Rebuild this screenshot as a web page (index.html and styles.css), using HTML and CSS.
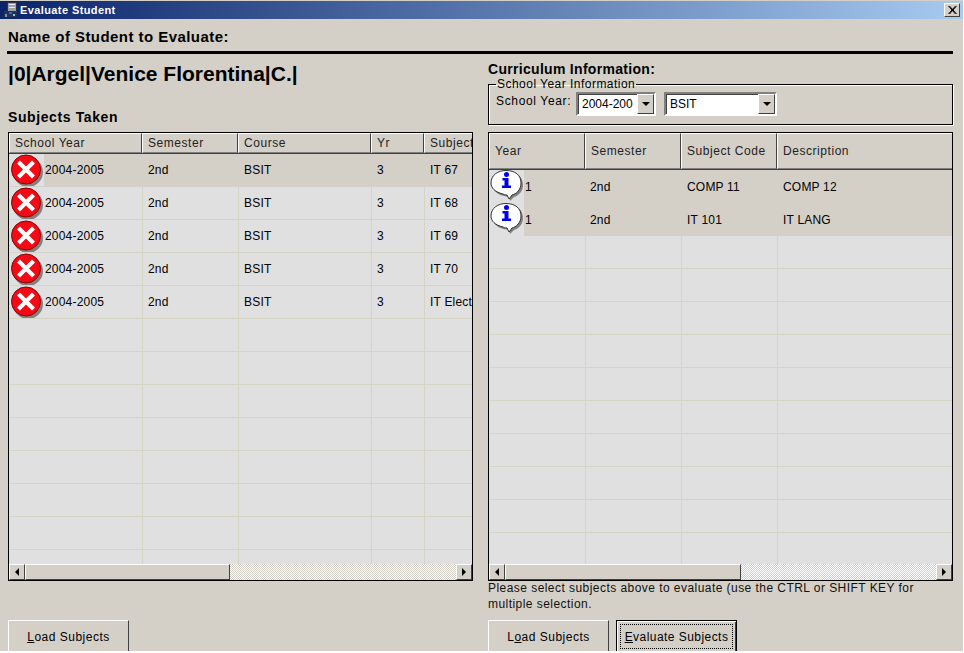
FILE: index.html

```html
<!DOCTYPE html>
<html lang="en">
<head>
    <meta charset="UTF-8">
    <title>Evaluate Student</title>
    <link rel="stylesheet" href="styles.css">
</head>
<body>

    <svg class="defs" width="0" height="0">
        <symbol id="icon-error" viewBox="0 0 34 34">
            <circle cx="18" cy="18" r="15" fill="#808080"/>
            <circle cx="16" cy="15.5" r="14.5" fill="#f40a14" stroke="#8a0008" stroke-width="1"/>
            <path d="M8.5 8 L23.5 23 M23.5 8 L8.5 23" stroke="#fff" stroke-width="4.2" fill="none"/>
        </symbol>
        <symbol id="icon-info" viewBox="0 0 34 34">
            <path d="M14 26 C6 24 3 20 3 15 C3 7 10 2 18 2 C27 2 33 7 33 15 C33 22 28 26 24 27 L20 31 L19 27 Z" fill="#808080"/>
            <path d="M13 24 C5 22 1 18 1 13 C1 5 8 0.5 16 0.5 C25 0.5 31 5 31 13 C31 20 26 24 22 25 L19 29 L17 25 C15 25 14 24.5 13 24 Z" fill="#fff" stroke="#333" stroke-width="1"/>
            <circle cx="16.5" cy="4.5" r="2.5" fill="#0000f0"/>
            <path d="M12.5 8 H18.5 V15.5 H21 V18 H12 V15.5 H14.5 V10.5 H12.5 Z" fill="#0000f0"/>
        </symbol>
    </svg>

    <div class="window">
        <div class="titlebar">
            <svg class="title-icon" width="14" height="16" viewBox="0 0 14 16">
                <rect x="3.5" y="0.5" width="9" height="12" fill="#a0a0a8" stroke="#30304a"/>
                <rect x="5" y="2" width="6" height="1" fill="#e8e8f0"/>
                <rect x="5" y="5" width="6" height="1" fill="#e8e8f0"/>
                <rect x="0" y="9" width="13" height="6" fill="#26324f"/>
                <rect x="1" y="12" width="2" height="3" fill="#7f90a0"/>
                <rect x="5" y="10" width="3" height="2" fill="#1a70e0"/>
                <rect x="9" y="12" width="2" height="2" fill="#7fd0e0"/>
            </svg>
            <span class="title-text">Evaluate Student</span>
            <span class="close-btn">
                <svg width="9" height="8" viewBox="0 0 9 8"><path d="M0.5 0 L7.5 8 M1.5 0 L8.5 8 M7.5 0 L0.5 8 M8.5 0 L1.5 8" stroke="#000" stroke-width="1" fill="none"/></svg>
            </span>
        </div>

        <div class="student-head">Name of Student to Evaluate:</div>
        <div class="rule"></div>

        <div class="columns">
            <div class="panel">
                <div class="student-name">|0|Argel|Venice Florentina|C.|</div>
                <div class="section-label subjects-label">Subjects Taken</div>

                <div class="grid">
                    <div class="grid-head left-head">
                        <div class="hcell c1">School Year</div>
                        <div class="hcell c2">Semester</div>
                        <div class="hcell c3">Course</div>
                        <div class="hcell c4">Yr</div>
                        <div class="hcell c5">Subject</div>
                    </div>
                    <div class="grid-body">
                        <div class="row current">
                            <div class="cell c1"><span class="icon-cell"><svg width="34" height="34"><use href="#icon-error"/></svg></span>2004-2005</div>
                            <div class="cell c2">2nd</div><div class="cell c3">BSIT</div><div class="cell c4">3</div><div class="cell c5">IT 67</div>
                        </div>
                        <div class="row">
                            <div class="cell c1"><span class="icon-cell"><svg width="34" height="34"><use href="#icon-error"/></svg></span>2004-2005</div>
                            <div class="cell c2">2nd</div><div class="cell c3">BSIT</div><div class="cell c4">3</div><div class="cell c5">IT 68</div>
                        </div>
                        <div class="row">
                            <div class="cell c1"><span class="icon-cell"><svg width="34" height="34"><use href="#icon-error"/></svg></span>2004-2005</div>
                            <div class="cell c2">2nd</div><div class="cell c3">BSIT</div><div class="cell c4">3</div><div class="cell c5">IT 69</div>
                        </div>
                        <div class="row">
                            <div class="cell c1"><span class="icon-cell"><svg width="34" height="34"><use href="#icon-error"/></svg></span>2004-2005</div>
                            <div class="cell c2">2nd</div><div class="cell c3">BSIT</div><div class="cell c4">3</div><div class="cell c5">IT 70</div>
                        </div>
                        <div class="row">
                            <div class="cell c1"><span class="icon-cell"><svg width="34" height="34"><use href="#icon-error"/></svg></span>2004-2005</div>
                            <div class="cell c2">2nd</div><div class="cell c3">BSIT</div><div class="cell c4">3</div><div class="cell c5">IT Elective</div>
                        </div>
                        <div class="row"><div class="cell c1"></div><div class="cell c2"></div><div class="cell c3"></div><div class="cell c4"></div><div class="cell c5"></div></div>
                        <div class="row"><div class="cell c1"></div><div class="cell c2"></div><div class="cell c3"></div><div class="cell c4"></div><div class="cell c5"></div></div>
                        <div class="row"><div class="cell c1"></div><div class="cell c2"></div><div class="cell c3"></div><div class="cell c4"></div><div class="cell c5"></div></div>
                        <div class="row"><div class="cell c1"></div><div class="cell c2"></div><div class="cell c3"></div><div class="cell c4"></div><div class="cell c5"></div></div>
                        <div class="row"><div class="cell c1"></div><div class="cell c2"></div><div class="cell c3"></div><div class="cell c4"></div><div class="cell c5"></div></div>
                        <div class="row"><div class="cell c1"></div><div class="cell c2"></div><div class="cell c3"></div><div class="cell c4"></div><div class="cell c5"></div></div>
                        <div class="row"><div class="cell c1"></div><div class="cell c2"></div><div class="cell c3"></div><div class="cell c4"></div><div class="cell c5"></div></div>
                        <div class="row"><div class="cell c1"></div><div class="cell c2"></div><div class="cell c3"></div><div class="cell c4"></div><div class="cell c5"></div></div>
                    </div>
                    <div class="scrollbar">
                        <span class="sb-btn"><i class="arrow-left"></i></span>
                        <span class="sb-thumb left-thumb"></span>
                        <span class="sb-track"></span>
                        <span class="sb-btn"><i class="arrow-right"></i></span>
                    </div>
                </div>

                <div class="buttons left-buttons">
                    <button class="btn"><u>L</u>oad Subjects</button>
                </div>
            </div>

            <div class="panel">
                <div class="section-label curriculum-label">Curriculum Information:</div>
                <fieldset class="groupbox">
                    <legend>School Year Information</legend>
                    <span class="field-label">School Year:</span>
                    <span class="combo year-combo">2004-200<span class="combo-btn"><i class="arrow-down"></i></span></span>
                    <span class="combo course-combo">BSIT<span class="combo-btn"><i class="arrow-down"></i></span></span>
                </fieldset>

                <div class="grid">
                    <div class="grid-head right-head">
                        <div class="hcell d1">Year</div>
                        <div class="hcell d2">Semester</div>
                        <div class="hcell d3">Subject Code</div>
                        <div class="hcell d4">Description</div>
                    </div>
                    <div class="grid-body">
                        <div class="row current info-row">
                            <div class="cell d1"><span class="icon-cell"><svg width="34" height="34"><use href="#icon-info"/></svg></span>1</div>
                            <div class="cell d2">2nd</div><div class="cell d3">COMP 11</div><div class="cell d4">COMP 12</div>
                        </div>
                        <div class="row current info-row">
                            <div class="cell d1"><span class="icon-cell"><svg width="34" height="34"><use href="#icon-info"/></svg></span>1</div>
                            <div class="cell d2">2nd</div><div class="cell d3">IT 101</div><div class="cell d4">IT LANG</div>
                        </div>
                        <div class="row"><div class="cell d1"></div><div class="cell d2"></div><div class="cell d3"></div><div class="cell d4"></div></div>
                        <div class="row"><div class="cell d1"></div><div class="cell d2"></div><div class="cell d3"></div><div class="cell d4"></div></div>
                        <div class="row"><div class="cell d1"></div><div class="cell d2"></div><div class="cell d3"></div><div class="cell d4"></div></div>
                        <div class="row"><div class="cell d1"></div><div class="cell d2"></div><div class="cell d3"></div><div class="cell d4"></div></div>
                        <div class="row"><div class="cell d1"></div><div class="cell d2"></div><div class="cell d3"></div><div class="cell d4"></div></div>
                        <div class="row"><div class="cell d1"></div><div class="cell d2"></div><div class="cell d3"></div><div class="cell d4"></div></div>
                        <div class="row"><div class="cell d1"></div><div class="cell d2"></div><div class="cell d3"></div><div class="cell d4"></div></div>
                        <div class="row"><div class="cell d1"></div><div class="cell d2"></div><div class="cell d3"></div><div class="cell d4"></div></div>
                        <div class="row"><div class="cell d1"></div><div class="cell d2"></div><div class="cell d3"></div><div class="cell d4"></div></div>
                        <div class="row"><div class="cell d1"></div><div class="cell d2"></div><div class="cell d3"></div><div class="cell d4"></div></div>
                    </div>
                    <div class="scrollbar">
                        <span class="sb-btn"><i class="arrow-left"></i></span>
                        <span class="sb-thumb right-thumb"></span>
                        <span class="sb-track"></span>
                        <span class="sb-btn"><i class="arrow-right"></i></span>
                    </div>
                </div>

                <p class="hint">Please select subjects above to evaluate (use the CTRL or SHIFT KEY for multiple selection.</p>

                <div class="buttons">
                    <button class="btn">L<u>o</u>ad Subjects</button>
                    <button class="btn default"><span class="focus"><u>E</u>valuate Subjects</span></button>
                </div>
            </div>
        </div>
    </div>

</body>
</html>
```

FILE: styles.css

```css
* {
    box-sizing: border-box;
}
html, body {
    margin: 0;
    padding: 0;
    background: #fff;
}
body {
    font-family: "Liberation Sans", Arial, sans-serif;
    font-size: 12px;
    color: #000;
}
.defs {
    position: absolute;
}
.window {
    width: 963px;
    height: 651px;
    overflow: hidden;
    background: #d4d0c8;
    border-top: 1px solid #d4d0c8;
}

/* title bar */
.titlebar {
    height: 18px;
    display: flex;
    align-items: center;
    background: linear-gradient(to right, #0a246a, #a6caf0);
    color: #fff;
    font-size: 11px;
    font-weight: bold;
    letter-spacing: 0.4px;
    padding-left: 4px;
}
.title-icon {
    margin-right: 2px;
}
.close-btn {
    margin-left: auto;
    margin-right: 3px;
    width: 16px;
    height: 14px;
    display: flex;
    align-items: center;
    justify-content: center;
    background: #d4d0c8;
    border: 1px solid;
    border-color: #fff #404040 #404040 #fff;
}

/* heading */
.student-head {
    font-size: 15px;
    font-weight: bold;
    padding: 9px 0 0 8px;
    height: 32px;
    letter-spacing: 0.45px;
}
.rule {
    height: 3px;
    width: 946px;
    margin-left: 7px;
    background: #000;
}
.columns {
    display: flex;
    gap: 15px;
    padding-left: 8px;
}
.panel {
    width: 465px;
    flex: none;
}
.student-name {
    font-size: 21px;
    font-weight: bold;
    height: 23px;
    margin-top: 8px;
    line-height: 23px;
}
.section-label {
    font-size: 14px;
    font-weight: bold;
    line-height: 15px;
}
.subjects-label {
    margin-top: 25px;
    height: 22px;
    letter-spacing: 0.6px;
}
.curriculum-label {
    margin-top: 8px;
    height: 16px;
    letter-spacing: 0.3px;
}

/* group box */
.groupbox {
    margin: 0 0 7px;
    padding: 0 0 0 7px;
    height: 47px;
    border: 1px solid #000;
    box-shadow: inset 1px 1px 0 #fff, 1px 1px 0 #fff;
    display: flex;
    align-items: flex-start;
}
.groupbox legend {
    padding: 0 1px;
    margin-left: 0;
    line-height: 12px;
    letter-spacing: 0.47px;
}
.field-label {
    letter-spacing: 0.65px;
    line-height: 14px;
    margin-top: 4px;
    width: 80px;
    flex: none;
}
.combo {
    height: 24px;
    background: #fff;
    border: 2px solid;
    border-color: #808080 #fff #fff #808080;
    box-shadow: inset 1px 1px 0 #404040;
    display: flex;
    align-items: center;
    padding-left: 4px;
    justify-content: space-between;
    flex: none;
    margin-top: 2px;
}
.year-combo {
    width: 80px;
    margin-right: 8px;
}
.course-combo {
    width: 113px;
}
.combo-btn {
    width: 17px;
    height: 20px;
    background: #d4d0c8;
    border: 1px solid;
    border-color: #fff #404040 #404040 #fff;
    display: flex;
    align-items: center;
    justify-content: center;
}
.arrow-down {
    border: 4px solid transparent;
    border-top-color: #000;
    border-bottom: 0;
}
.arrow-left {
    border: 4px solid transparent;
    border-right-color: #000;
    border-left: 0;
}
.arrow-right {
    border: 4px solid transparent;
    border-left-color: #000;
    border-right: 0;
}

/* grids */
.grid {
    height: 449px;
    border: 1px solid #000;
    background: #e0e0e0;
    display: flex;
    flex-direction: column;
    overflow: hidden;
    letter-spacing: 0.2px;
}
.grid-head {
    display: flex;
    flex: none;
    background: #d4d0c8;
    border-bottom: 1px solid #404040;
}
.left-head {
    height: 21px;
}
.right-head {
    height: 37px;
}
.hcell {
    border: 1px solid;
    border-color: #fff #404040 #808080 #fff;
    padding-left: 5px;
    display: flex;
    align-items: center;
    flex: none;
    letter-spacing: 0.55px;
    color: #222;
    white-space: nowrap;
    overflow: hidden;
}
.c1 { width: 133px; }
.c2 { width: 96px; }
.c3 { width: 133px; }
.c4 { width: 53px; }
.c5 { width: 50px; }
.d1 { width: 96px; }
.d2 { width: 96px; }
.d3 { width: 96px; }
.d4 { width: 176px; }
.grid-body {
    flex: 1;
    overflow: hidden;
}
.row {
    display: flex;
    height: 33px;
}
.row.current {
    background: #d4d0c8;
}
.cell {
    flex: none;
    height: 33px;
    border-right: 1px solid #d6d4c4;
    border-bottom: 1px solid #d6d4c4;
    padding-left: 5px;
    display: flex;
    align-items: center;
    white-space: nowrap;
    overflow: hidden;
}
.current .cell {
    border-color: transparent;
}
.info-row .cell {
    border-bottom: 0;
}
.cell.c1, .cell.d1 {
    padding-left: 0;
}
/* body columns sit one pixel right of the header separators */
.cell.c1 {
    width: 134px;
}
.cell.d1 {
    width: 97px;
}
.cell.d2 {
    padding-left: 4px;
}
.icon-cell {
    width: 35px;
    height: 33px;
    flex: none;
    background: #e0e0e0;
    display: block;
    padding: 0 0 0 1px;
    margin-right: 1px;
}
.icon-cell svg {
    display: block;
}

/* scrollbar */
.scrollbar {
    flex: none;
    height: 16px;
    display: flex;
    background: #d4d0c8;
}
.sb-btn {
    width: 16px;
    height: 16px;
    flex: none;
    display: flex;
    align-items: center;
    justify-content: center;
    background: #d4d0c8;
    border: 1px solid;
    border-color: #fff #404040 #404040 #fff;
}
.sb-thumb {
    flex: none;
    background: #d4d0c8;
    border: 1px solid;
    border-color: #fff #404040 #404040 #fff;
}
.left-thumb {
    width: 205px;
}
.right-thumb {
    width: 236px;
}
.sb-track {
    flex: 1;
    background: repeating-conic-gradient(#fff 0 25%, #d4d0c8 0 50%) 0 0 / 2px 2px;
}

/* bottom */
.hint {
    margin: -1px 0 0;
    height: 40px;
    line-height: 16px;
    letter-spacing: 0.45px;
    color: #111;
}
.buttons {
    display: flex;
    gap: 7px;
}
.left-buttons {
    margin-top: 39px;
}
.btn {
    font-family: inherit;
    font-size: 12px;
    letter-spacing: 0.5px;
    width: 121px;
    height: 40px;
    padding: 0 0 6px;
    background: #d4d0c8;
    border: 1px solid;
    border-color: #fff #404040 #404040 #fff;
    color: #000;
}
.btn.default {
    border: 1px solid #000;
    box-shadow: inset 1px 1px 0 #fff, inset -1px -1px 0 #404040;
    padding: 3px;
    display: flex;
    align-items: flex-start;
    letter-spacing: 0.45px;
}
.focus {
    flex: 1;
    height: 25px;
    border: 1px dotted #000;
    display: flex;
    align-items: center;
    justify-content: center;
    white-space: nowrap;
}
```
